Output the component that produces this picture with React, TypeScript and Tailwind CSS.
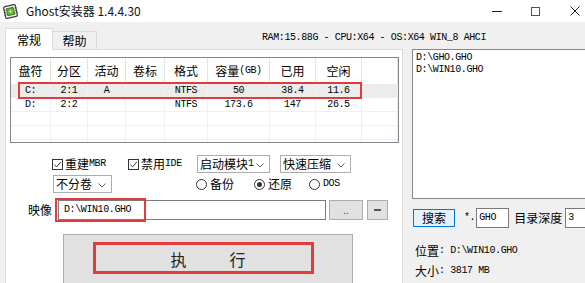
import React from "react";

const CJK = "[font-family:'Noto_Sans_CJK_SC','Noto_Sans',sans-serif]";
const MONO = "[font-family:'Liberation_Mono',monospace] text-[10px] tracking-[-0.4px]";

function AppIcon() {
  return (
    <svg width="15" height="15" viewBox="0 0 15 15" className="ml-[3px]">
      <g transform="rotate(-12 7.5 7.5)">
        <rect x="1.5" y="1.5" width="12" height="12" rx="1.5" fill="#f4f4e8" stroke="#3c3c3c" strokeWidth="1.2" />
        <rect x="4" y="4" width="7" height="7" fill="#5cb82e" stroke="#2f6b17" strokeWidth="0.8" />
        <path d="M5.5 7.5h4M7.5 5.5v4" stroke="#d9f2c9" strokeWidth="0.8" />
        <path d="M1 5h2M1 7.5h2M1 10h2M12 5h2M12 7.5h2M12 10h2" stroke="#3c3c3c" strokeWidth="0.8" />
      </g>
    </svg>
  );
}

function Check({ label, mono }: { label: string; mono: string }) {
  return (
    <div className="flex items-center">
      <div className="w-[11px] h-[11px] border border-[#333] bg-white flex items-center justify-center">
        <svg width="9" height="9" viewBox="0 0 9 9">
          <path d="M1.3 4.6 L3.6 6.9 L7.8 1.9" fill="none" stroke="#333" strokeWidth="1" />
        </svg>
      </div>
      <span className={`ml-[2px] text-[12px] ${CJK}`}>{label}</span>
      <span className={`${MONO} text-[9px]`}>{mono}</span>
    </div>
  );
}

function Chevron() {
  return (
    <svg width="8" height="5" viewBox="0 0 8 5" className="absolute right-[5px] top-[7px]">
      <path d="M0.5 0.5 L4 4 L7.5 0.5" fill="none" stroke="#606060" strokeWidth="1" />
    </svg>
  );
}

function Select({ w, text, mono }: { w: string; text: string; mono?: string }) {
  return (
    <div className={`${w} h-[18px] border border-[#acacac] bg-white relative flex items-center pl-[2px]`}>
      <span className={`text-[12px] ${CJK}`}>{text}</span>
      {mono && <span className={MONO}>{mono}</span>}
      <Chevron />
    </div>
  );
}

function Radio({ label, checked, mono }: { label: string; checked?: boolean; mono?: boolean }) {
  return (
    <div className="flex items-center">
      <div className="w-[11px] h-[11px] rounded-full border border-[#333] bg-white flex items-center justify-center">
        {checked && <div className="w-[5px] h-[5px] rounded-full bg-[#333]" />}
      </div>
      <span className={mono ? `ml-[3px] ${MONO}` : `ml-[3px] text-[12px] ${CJK}`}>{label}</span>
    </div>
  );
}

const widths = ["w-[40px]", "w-[37px]", "w-[38px]", "w-[39px]", "w-[43px]", "w-[62px]", "w-[46px]", "w-[46px]", "w-[36px]"];
const headers = ["盘符", "分区", "活动", "卷标", "格式", "容量", "已用", "空闲", ""];
const rows: string[][] = [
  ["C:", "2:1", "A", "", "NTFS", "50", "38.4", "11.6", ""],
  ["D:", "2:2", "", "", "NTFS", "173.6", "147", "26.5", ""],
  ["", "", "", "", "", "", "", "", ""],
  ["", "", "", "", "", "", "", "", ""],
  ["", "", "", "", "", "", "", "", ""],
];

function ListView() {
  return (
    <div className="w-[389px] h-[86px] border border-[#828790] bg-white relative overflow-hidden ml-[4px] mt-[7px]">
      <div className="flex h-[26px]">
        {headers.map((h, i) => (
          <div key={i} className={`${widths[i]} shrink-0 h-full border-r border-[#e5e5e5] flex items-center justify-center text-[12px] ${CJK}`}>
            {h}
            {i === 5 && <span className={`${MONO} text-[9px]`}>(GB)</span>}
          </div>
        ))}
      </div>
      {rows.map((r, ri) => (
        <div key={ri} className={`flex h-[14px] border-b border-[#f0f0f0] ${ri === 0 ? "bg-[#ececec]" : ""}`}>
          {r.map((c, i) => (
            <div key={i} className={`${widths[i]} shrink-0 h-full border-r border-[#f0f0f0] flex items-center justify-center ${MONO}`}>
              {c}
            </div>
          ))}
        </div>
      ))}
      <div className="absolute left-[7px] top-[24px] w-[344px] h-[17px] border-2 border-[#e23b3b]" />
    </div>
  );
}

export default function App() {
  return (
    <div className={`w-[585px] h-[283px] overflow-hidden bg-[#f0f0f0] text-black leading-none ${CJK}`}>
      {/* Title bar */}
      <div className="h-[22px] bg-white flex items-center">
        <AppIcon />
        <span className="ml-[8px] text-[12px] text-[#111]">Ghost安装器 1.4.4.30</span>
        <div className="ml-auto flex items-center">
          <div className="w-[10px] h-px bg-[#222]" />
          <div className="ml-[29px] w-[9px] h-[9px] border border-[#555]" />
          <svg width="10" height="10" viewBox="0 0 10 10" className="ml-[30px] mr-[5px]">
            <path d="M0.5 0.5 L9.5 9.5 M9.5 0.5 L0.5 9.5" stroke="#222" strokeWidth="1" />
          </svg>
        </div>
      </div>

      {/* Tabs row */}
      <div className="h-[27px] flex items-end">
        <div className="pl-[5px] flex items-end">
          <div className="relative z-10 -mb-px w-[48px] h-[22px] bg-white border border-b-0 border-[#d9d9d9] flex items-center justify-center text-[12px]">
            常规
          </div>
          <div className="w-[44px] h-[18px] bg-[#f0f0f0] border border-l-0 border-b-0 border-[#d9d9d9] flex items-center justify-center text-[12px]">
            帮助
          </div>
        </div>
        <div className={`self-start mt-[11px] ml-[165px] ${MONO} whitespace-pre`}>RAM:15.88G - CPU:X64 - OS:X64 WIN_8 AHCI</div>
      </div>

      {/* Body */}
      <div className="flex">
        <div className="ml-[5px] w-[398px] shrink-0 h-[250px] border border-[#d9d9d9] bg-white flex flex-col">
          <ListView />

          {/* Options row 1 */}
          <div className="flex items-center mt-[12px] h-[18px] ml-[46px]">
            <div className="w-[76px]"><Check label="重建" mono="MBR" /></div>
            <div className="w-[69px]"><Check label="禁用" mono="IDE" /></div>
            <Select w="w-[73px]" text="启动模块" mono="1" />
            <div className="ml-[10px]"><Select w="w-[71px]" text="快速压缩" /></div>
          </div>

          {/* Options row 2 */}
          <div className="flex items-center mt-[2px] h-[18px] ml-[47px]">
            <Select w="w-[59px]" text="不分卷" />
            <div className="ml-[84px] w-[58px]"><Radio label="备份" /></div>
            <div className="w-[55px]"><Radio label="还原" checked /></div>
            <Radio label="DOS" mono />
          </div>

          {/* Image row */}
          <div className="relative flex items-center mt-[7px] h-[20px] ml-[22px]">
            <span className="w-[30px] text-[12px]">映像</span>
            <div className={`w-[268px] h-[20px] border border-[#7a7a7a] bg-white flex items-center pl-[5px] ${MONO}`}>D:\WIN10.GHO</div>
            <div className="ml-[3px] w-[34px] h-[20px] bg-[#e1e1e1] border border-[#adadad] flex items-center justify-center text-[10px] text-[#444]">..</div>
            <div className="ml-[4px] w-[21px] h-[20px] bg-[#e1e1e1] border border-[#adadad] flex items-center justify-center">
              <div className="w-[7px] h-[2px] bg-[#555]" />
            </div>
            <div className="absolute left-[27px] top-[-2px] w-[91px] h-[24px] border-2 border-[#e23b3b]" />
          </div>

          {/* Execute */}
          <div className="relative mt-[14px] ml-[57px] w-[290px] h-[60px] bg-[#e1e1e1] border border-[#adadad]">
            <div className="absolute left-[29px] top-[7px] w-[221px] h-[32px] border-[3px] border-[#e23b3b]" />
            <div className="absolute left-0 right-0 top-[16px] flex justify-center gap-[43px] text-[16px] text-[#222]">
              <span>执</span>
              <span>行</span>
            </div>
          </div>
        </div>

        {/* Right column */}
        <div className="ml-[9px] w-[200px] shrink-0 flex flex-col">
          <div className="w-[180px] h-[150px] border border-[#828790] bg-white pl-[3px] pt-[2px] flex flex-col">
            <div className={`${MONO} h-[12px] flex items-center`}>D:\GHO.GHO</div>
            <div className={`${MONO} h-[12px] flex items-center`}>D:\WIN10.GHO</div>
          </div>

          <div className="flex items-center mt-[9px] h-[20px] whitespace-nowrap">
            <div className="ml-px w-[42px] h-[18px] shrink-0 bg-[#e5f1fb] border border-[#0078d7] flex items-center justify-center text-[12px]">搜索</div>
            <span className={`ml-[9px] ${MONO}`}>*.</span>
            <div className={`ml-[1px] w-[33px] shrink-0 h-[20px] border border-[#7a7a7a] bg-white flex items-center pl-[2px] ${MONO}`}>GHO</div>
            <span className="ml-[5px] text-[12px] shrink-0">目录深度</span>
            <div className={`ml-[3px] w-[30px] shrink-0 h-[20px] border border-[#7a7a7a] bg-white flex items-center pl-[2px] ${MONO}`}>3</div>
          </div>

          <div className="flex items-center mt-[17px] ml-[3px] h-[12px]">
            <span className="text-[12px]">位置</span>
            <span className={MONO}>: D:\WIN10.GHO</span>
          </div>
          <div className="flex items-center mt-[8px] ml-[3px] h-[12px]">
            <span className="text-[12px]">大小</span>
            <span className={MONO}>: 3817 MB</span>
          </div>
        </div>
      </div>
    </div>
  );
}
